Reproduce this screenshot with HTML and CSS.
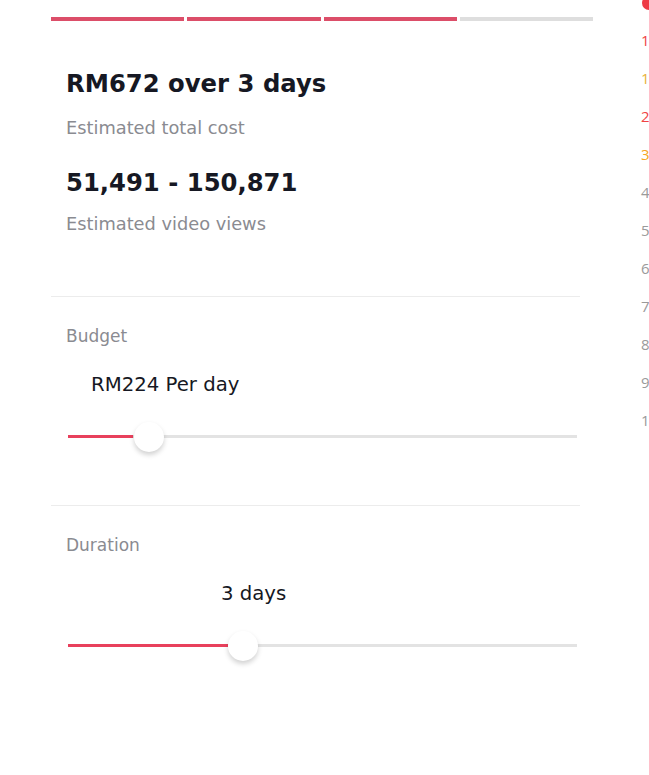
FILE: index.html
```html
<!DOCTYPE html>
<html>
<head>
<meta charset="utf-8">
<link rel="stylesheet" href="styles.css">
</head>
<body>
<div class="page">
  <main class="panel">
    <div class="steps">
      <span class="step done"></span>
      <span class="step done"></span>
      <span class="step done"></span>
      <span class="step"></span>
    </div>
    <section class="summary">
      <h1 class="big">RM672 over 3 days</h1>
      <p class="sub first-sub">Estimated total cost</p>
      <h2 class="big second">51,491 - 150,871</h2>
      <p class="sub">Estimated video views</p>
    </section>
    <section class="field">
      <div class="label">Budget</div>
      <div class="value budget-value">RM224 Per day</div>
      <div class="slider">
        <div class="fill" style="width: 65px"></div>
        <div class="thumb" style="left: 66px"></div>
      </div>
    </section>
    <section class="field">
      <div class="label">Duration</div>
      <div class="value duration-value">3 days</div>
      <div class="slider">
        <div class="fill" style="width: 160px"></div>
        <div class="thumb" style="left: 160px"></div>
      </div>
    </section>
  </main>
  <aside class="rank">
    <span class="dot"></span>
    <ol class="ranklist">
      <li class="r-red">1</li>
      <li class="r-yellow">1</li>
      <li class="r-red">2</li>
      <li class="r-orange">3</li>
      <li>4</li>
      <li>5</li>
      <li>6</li>
      <li>7</li>
      <li>8</li>
      <li>9</li>
      <li>10</li>
    </ol>
  </aside>
</div>
</body>
</html>
```
FILE: styles.css
```css
html, body {
  margin: 0;
  padding: 0;
  background: #ffffff;
}
body {
  font-family: "DejaVu Sans", "Liberation Sans", sans-serif;
  color: #161823;
  width: 649px;
  height: 775px;
  overflow: hidden;
}
.page {
  display: flex;
  width: 649px;
  height: 775px;
}
.panel {
  width: 580px;
  padding-left: 51px;
  flex: none;
}
.steps {
  display: flex;
  gap: 3px;
  width: 542px;
  margin-top: 17px;
}
.step {
  flex: 1;
  height: 4px;
  background: #dedede;
}
.step.done {
  background: #dc4e69;
}
.summary {
  padding-left: 15px;
  padding-top: 48px;
  padding-bottom: 61px;
  border-bottom: 1px solid #ececec;
  width: 514px;
}
.big {
  margin: 0;
  font-size: 24.3px;
  font-weight: 700;
  line-height: 30px;
  color: #161823;
}
.second {
  margin-top: 29px;
}
.sub {
  margin: 15px 0 0;
  font-size: 17.8px;
  line-height: 22px;
  color: #8a8b91;
}
.first-sub {
  margin-top: 18px;
}
.field {
  padding-left: 15px;
  width: 514px;
  border-bottom: 1px solid #ececec;
  padding-top: 28px;
  padding-bottom: 67px;
}
.field:last-child {
  border-bottom: none;
}
.label {
  font-size: 17px;
  line-height: 22px;
  color: #8a8b91;
}
.value {
  font-size: 19.7px;
  line-height: 24px;
  color: #161823;
  margin-top: 26px;
}
.budget-value {
  padding-left: 25px;
}
.duration-value {
  padding-left: 155px;
}
.slider {
  position: relative;
  margin-top: 38px;
  margin-left: 2px;
  width: 509px;
  height: 3px;
  background: #e3e3e3;
}
.fill {
  height: 3px;
  background: #e8405c;
}
.thumb {
  position: absolute;
  top: -13px;
  width: 30px;
  height: 30px;
  border-radius: 50%;
  background: #ffffff;
  box-shadow: 0 3px 5px rgba(0, 0, 0, 0.18);
}
.rank {
  flex: 1;
  position: relative;
  overflow: hidden;
}
.dot {
  position: absolute;
  left: 11px;
  top: -4px;
  width: 14px;
  height: 14px;
  border-radius: 50%;
  background: #ee3b46;
}
.ranklist {
  list-style: none;
  margin: 0;
  padding: 21px 0 0 10px;
  font-family: "Open Sans", "Liberation Sans", sans-serif;
  font-size: 15px;
  line-height: 38px;
  color: #9a9a9a;
}
.r-red { color: #f04444; }
.r-yellow { color: #e9b23a; }
.r-orange { color: #f5a623; }
```
